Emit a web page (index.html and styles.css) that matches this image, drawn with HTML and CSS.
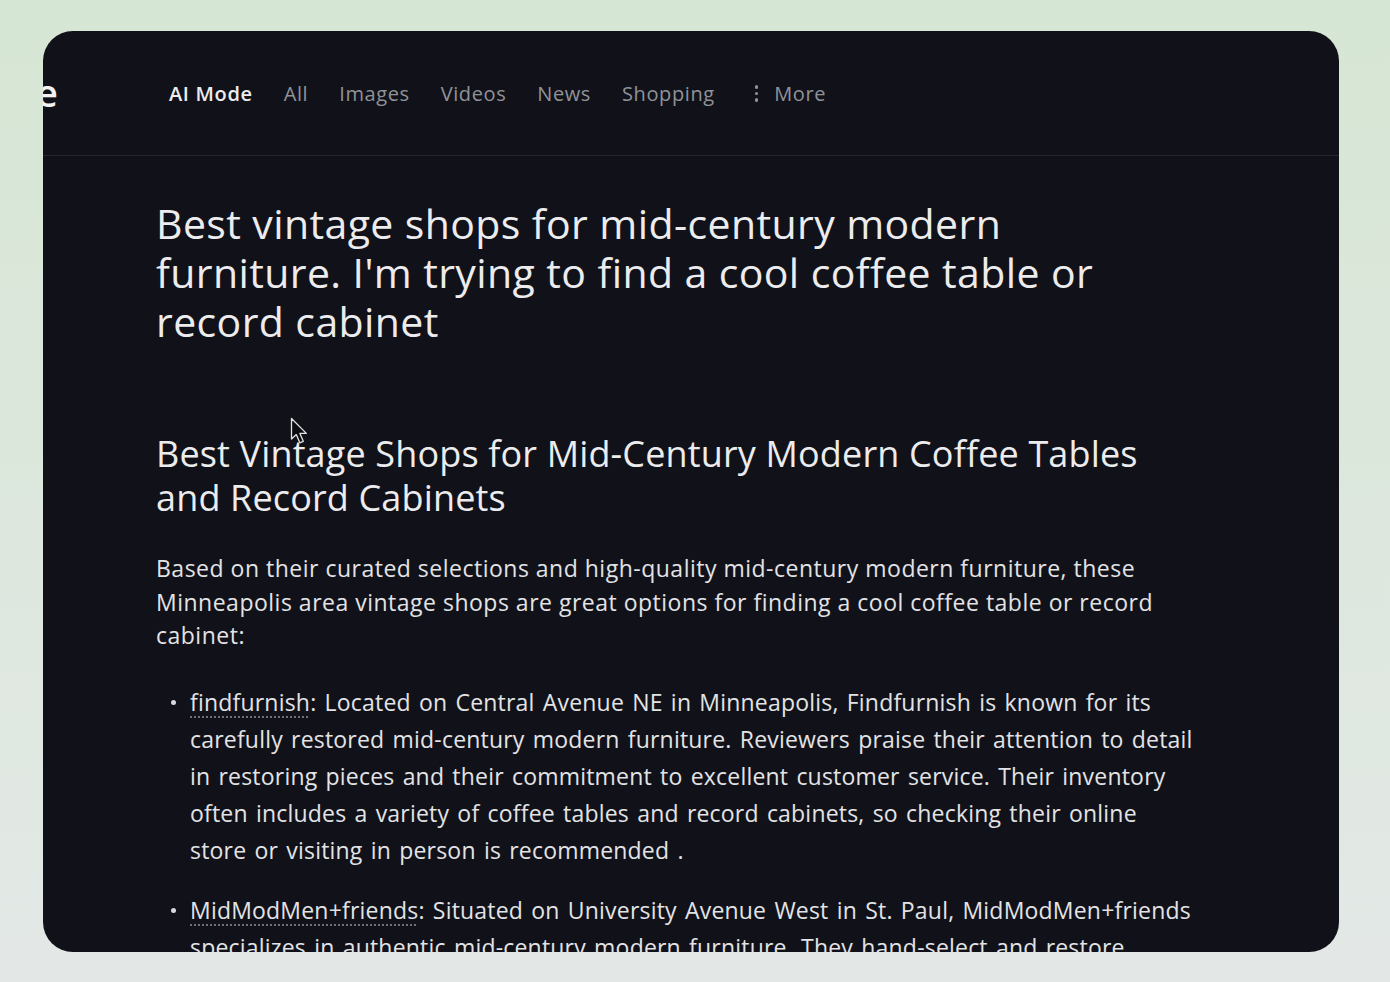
FILE: index.html
```html
<!DOCTYPE html>
<html lang="en">
<head>
<meta charset="utf-8">
<title>AI Mode</title>
<link rel="stylesheet" href="styles.css">
</head>
<body>
<div class="card">
  <header class="topbar">
    <span class="logo">e</span>
    <nav class="tabs">
      <a class="tab active">AI Mode</a>
      <a class="tab">All</a>
      <a class="tab">Images</a>
      <a class="tab">Videos</a>
      <a class="tab">News</a>
      <a class="tab">Shopping</a>
      <a class="tab more"><span class="dots"><i></i><i></i><i></i></span>More</a>
    </nav>
  </header>
  <main class="content">
    <h1 class="query">Best vintage shops for mid-century modern furniture. I'm trying to find a cool coffee table or record cabinet</h1>
    <h2 class="answer-title">Best Vintage Shops for Mid-Century Modern Coffee Tables and Record Cabinets</h2>
    <p class="intro">Based on their curated selections and high-quality mid-century modern furniture, these Minneapolis area vintage shops are great options for finding a cool coffee table or record cabinet:</p>
    <ul class="shops">
      <li><span class="name">findfurnish</span>: Located on Central Avenue NE in Minneapolis, Findfurnish is known for its carefully restored mid-century modern furniture. Reviewers praise their attention to detail in restoring pieces and their commitment to excellent customer service. Their inventory often includes a variety of coffee tables and record cabinets, so checking their online store or visiting in person is recommended .</li>
      <li><span class="name">MidModMen+friends</span>: Situated on University Avenue West in St. Paul, MidModMen+friends specializes in authentic mid-century modern furniture. They hand-select and restore quality pieces, offering a curated collection of vintage finds.</li>
    </ul>
  </main>
  <svg class="cursor" width="19" height="28" viewBox="0 0 19 28"><path d="M1.5 1.5 L1.5 22 L6.3 17.6 L9.8 25.8 L13.3 24.3 L9.9 16.4 L16.3 16.4 Z" fill="#0b0c10" stroke="#e2e2e2" stroke-width="1.3" stroke-linejoin="round"/></svg>
</div>
</body>
</html>
```
FILE: styles.css
```css
html, body {
  margin: 0;
  padding: 0;
}
body {
  width: 1390px;
  height: 982px;
  overflow: hidden;
  background: linear-gradient(180deg, #d6e6d4 0%, #dce7dc 45%, #e3e8e6 100%);
  font-family: "Open Sans", "Liberation Sans", sans-serif;
}
.card {
  position: relative;
  margin: 31px 0 0 43px;
  width: 1296px;
  height: 921px;
  background: #111219;
  border-radius: 30px;
  overflow: hidden;
  color: #e6e6e9;
}
.topbar {
  height: 125px;
  border-bottom: 1px solid #25262d;
  display: flex;
  align-items: center;
  box-sizing: border-box;
}
.logo {
  font-size: 38px;
  font-weight: 600;
  color: #f2f2f2;
  margin-left: -7px;
  width: 133px;
  line-height: 1;
  margin-top: -3px;
}
.tabs {
  display: flex;
  align-items: center;
  gap: 31px;
  margin-top: 1px;
}
.tab {
  font-size: 20px;
  color: #909298;
  letter-spacing: 0.6px;
}
.tab.active {
  color: #ececee;
  font-weight: 600;
  letter-spacing: 0.65px;
}
.tab.more {
  display: flex;
  align-items: center;
  margin-left: 9px;
}
.dots {
  display: flex;
  flex-direction: column;
  gap: 3px;
  margin-right: 16px;
}
.dots i {
  width: 3.5px;
  height: 3.5px;
  border-radius: 50%;
  background: #909298;
}
.content {
  padding: 43px 0 0 113px;
  width: 1039px;
}
.query {
  margin: 0;
  font-size: 41px;
  font-weight: 400;
  line-height: 49px;
  letter-spacing: 0.4px;
  color: #ececee;
  width: 960px;
}
.answer-title {
  margin: 86px 0 0;
  font-size: 36px;
  font-weight: 400;
  line-height: 44px;
  letter-spacing: 0.15px;
  color: #ececee;
  max-width: 1005px;
}
.intro {
  margin: 32px 0 0;
  font-size: 23px;
  line-height: 33.5px;
  letter-spacing: 0.5px;
  color: #e3e3e6;
}
.shops {
  margin: 31px 0 0;
  padding: 0 0 0 34px;
  list-style: none;
}
.shops li {
  position: relative;
  font-size: 23px;
  line-height: 37px;
  letter-spacing: 0.2px;
  word-spacing: 2px;
  color: #e3e3e6;
  margin-bottom: 23px;
}
.shops li::before {
  content: "";
  position: absolute;
  left: -19px;
  top: 16px;
  width: 5px;
  height: 5px;
  border-radius: 50%;
  background: #d8d8dc;
}
.name {
  text-decoration: underline dotted #6f7178;
  text-decoration-thickness: 2px;
  text-underline-offset: 6px;
}
.cursor {
  position: absolute;
  left: 247px;
  top: 386px;
}
```
